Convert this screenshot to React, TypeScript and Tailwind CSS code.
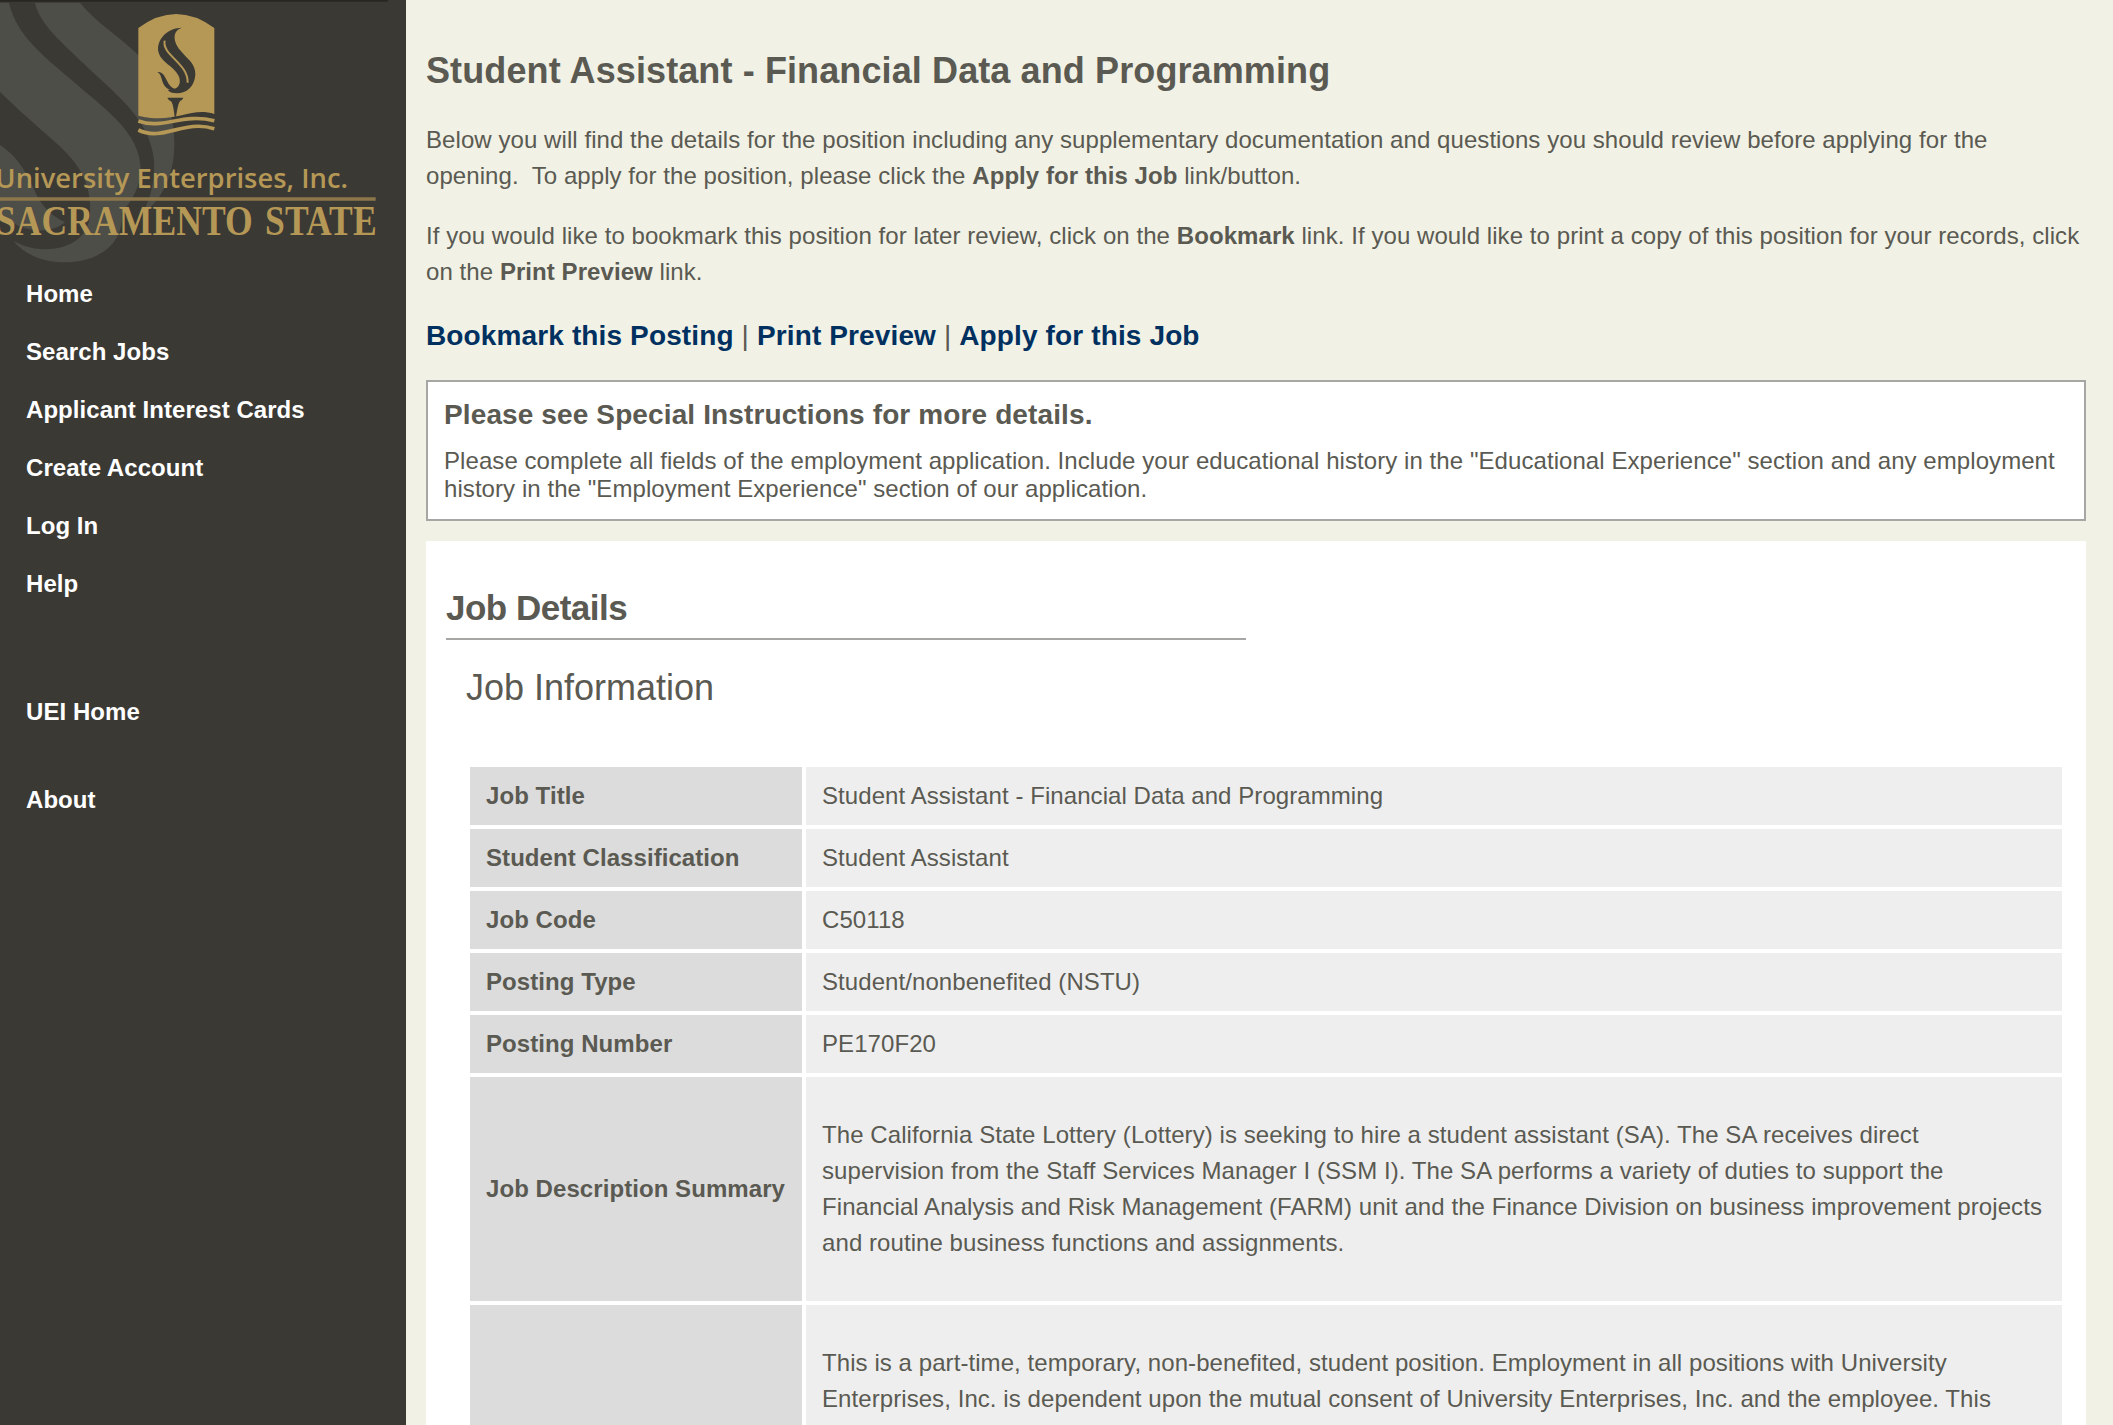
import type { ReactNode } from "react";

const mainNav = ["Home", "Search Jobs", "Applicant Interest Cards", "Create Account", "Log In", "Help"];

const rows = [
  ["Job Title", "Student Assistant - Financial Data and Programming"],
  ["Student Classification", "Student Assistant"],
  ["Job Code", "C50118"],
  ["Posting Type", "Student/nonbenefited (NSTU)"],
  ["Posting Number", "PE170F20"],
];

function Logo() {
  return (
    <svg className="block h-[271px] w-[406px]" viewBox="0 0 1218 813">
      <rect width="1164" height="5" fill="#272621" />
      <g fill="#4e4e48">
        <path d="M0 8H27C50 110 140 175 215 240C310 325 422 395 422 510C420 560 400 595 365 640C372 740 285 787 195 787C130 787 75 765 40 722C90 752 150 752 190 740C250 720 275 680 270 610C265 510 200 455 130 395C80 350 40 315 0 275Z" />
        <path d="M105 8H240C290 70 360 110 420 170C480 240 523 320 523 430C523 530 485 600 425 645C455 590 465 540 462 480C450 350 330 270 250 190C190 130 120 75 105 8Z" />
        <path d="M0 435C60 475 85 530 110 585C130 625 160 650 195 667C150 705 60 700 0 640Z" />
      </g>
      <path d="M415 84Q528 0 643 84V342C570 318 525 375 415 347Z" fill="#b59756" />
      <g fill="none" stroke="#b59756" strokeWidth="11">
        <path d="M415 363C490 390 545 338 643 362" />
        <path d="M415 390C490 426 550 357 643 386" />
      </g>
      <g fill="#3b3934">
        <path d="M546 83C515 93 520 125 540 150C560 176 588 190 586 225C583 258 562 280 530 280C518 280 507 276 503 270C535 272 546 250 536 228C520 195 474 185 474 145C476 112 505 84 546 83Z" />
        <path d="M472 216C490 214 495 232 503 246C510 260 520 266 530 268C504 278 490 256 486 240C483 229 480 220 472 216Z" />
        <path d="M502 293H550L546 300C535 303 534 318 528 350H524C520 318 518 303 507 301Z" />
      </g>
      <path d="M494 122C485 165 565 190 563 248" fill="none" stroke="#b59756" strokeWidth="6" />
      <path d="M0 597H1127" stroke="#8d774a" strokeWidth="10" />
      <text x="-14" y="563" fill="#b59756" fontFamily="'Open Sans', sans-serif" fontSize="79" fontWeight="600" textLength="1058" lengthAdjust="spacingAndGlyphs">University Enterprises, Inc.</text>
      <text x="-12" y="705" fill="#b59756" fontFamily="'Liberation Serif', serif" fontSize="126" wordSpacing="12" textLength="1142" lengthAdjust="spacingAndGlyphs">SACRAMENTO STATE</text>
    </svg>
  );
}

function Row({ label, children }: { label: string; children: ReactNode }) {
  return (
    <tr>
      <th className="bg-[#dcdcdc] px-4 pt-[14.5px] pb-[16.5px] text-left align-middle leading-[27px] font-bold whitespace-nowrap">{label}</th>
      <td className="bg-[#eeeeee] px-4 pt-[14.5px] pb-[16.5px] align-middle leading-[27px]">{children}</td>
    </tr>
  );
}

export default function App() {
  return (
    <div className="flex h-[1425px] w-[2113px] overflow-hidden bg-[#f1f1e5] font-['Liberation_Sans',Arial,sans-serif] text-[24px] leading-[36px] tracking-[0.068px] text-[#5a5a52]">
      <aside className="w-[406px] shrink-0 bg-[#3b3934] font-bold tracking-[0.055px] text-white">
        <Logo />
        <nav className="flex flex-col pl-[26px]">
          {mainNav.map((item) => (
            <a key={item} className="h-[58px] pt-[5px]">{item}</a>
          ))}
          <a className="mt-[70px] h-[88px] pt-[5px]">UEI Home</a>
          <a className="pt-[5px]">About</a>
        </nav>
      </aside>
      <main className="ml-5 w-[1660px]">
        <h1 className="mt-[50px] text-[36px] leading-[42px] font-bold tracking-[0.11px]">Student Assistant - Financial Data and Programming</h1>
        <p className="mt-[30px]">
          Below you will find the details for the position including any supplementary documentation and questions you should review before applying for the<br />
          opening.&nbsp; To apply for the position, please click the <b>Apply for this Job</b> link/button.
        </p>
        <p className="mt-6">
          If you would like to bookmark this position for later review, click on the <b>Bookmark</b> link. If you would like to print a copy of this position for your records, click<br />
          on the <b>Print Preview</b> link.
        </p>
        <p className="mt-[28px] text-[28px] leading-[36px] tracking-[0.13px]">
          <a className="font-bold text-[#003060]">Bookmark this Posting</a> | <a className="font-bold text-[#003060]">Print Preview</a> |{" "}
          <a className="font-bold text-[#003060]">Apply for this Job</a>
        </p>
        <section className="mt-[26px] h-[141px] border-2 border-[#a6a6a4] bg-white px-4 pt-[17px]">
          <h3 className="text-[28px] leading-[32px] font-bold tracking-[0.12px]">Please see Special Instructions for more details.</h3>
          <p className="mt-4 leading-[28px]">
            Please complete all fields of the employment application. Include your educational history in the "Educational Experience" section and any employment<br />
            history in the "Employment Experience" section of our application.
          </p>
        </section>
        <section className="mt-5 h-[1000px] bg-white px-5 pt-[46px]">
          <h2 className="h-[53px] w-[800px] border-b-2 border-[#a6a6a4] text-[35px] leading-[42px] font-bold tracking-[-0.5px]">Job Details</h2>
          <h3 className="mt-[27px] pl-5 text-[36px] leading-[42px] tracking-normal">Job Information</h3>
          <table className="mt-[54px] ml-5 w-[1600px] border-separate border-spacing-1">
            <tbody>
              {rows.map(([label, value]) => (
                <Row key={label} label={label}>{value}</Row>
              ))}
              <Row label="Job Description Summary">
                <p className="mt-[25.5px] mb-[23.5px] leading-[36px]">
                  The California State Lottery (Lottery) is seeking to hire a student assistant (SA). The SA receives direct<br />
                  supervision from the Staff Services Manager I (SSM I). The SA performs a variety of duties to support the<br />
                  Financial Analysis and Risk Management (FARM) unit and the Finance Division on business improvement projects<br />
                  and routine business functions and assignments.
                </p>
              </Row>
              <Row label="">
                <p className="mt-[25.5px] mb-[23.5px] leading-[36px]">
                  This is a part-time, temporary, non-benefited, student position. Employment in all positions with University<br />
                  Enterprises, Inc. is dependent upon the mutual consent of University Enterprises, Inc. and the employee. This
                </p>
              </Row>
            </tbody>
          </table>
        </section>
      </main>
    </div>
  );
}
